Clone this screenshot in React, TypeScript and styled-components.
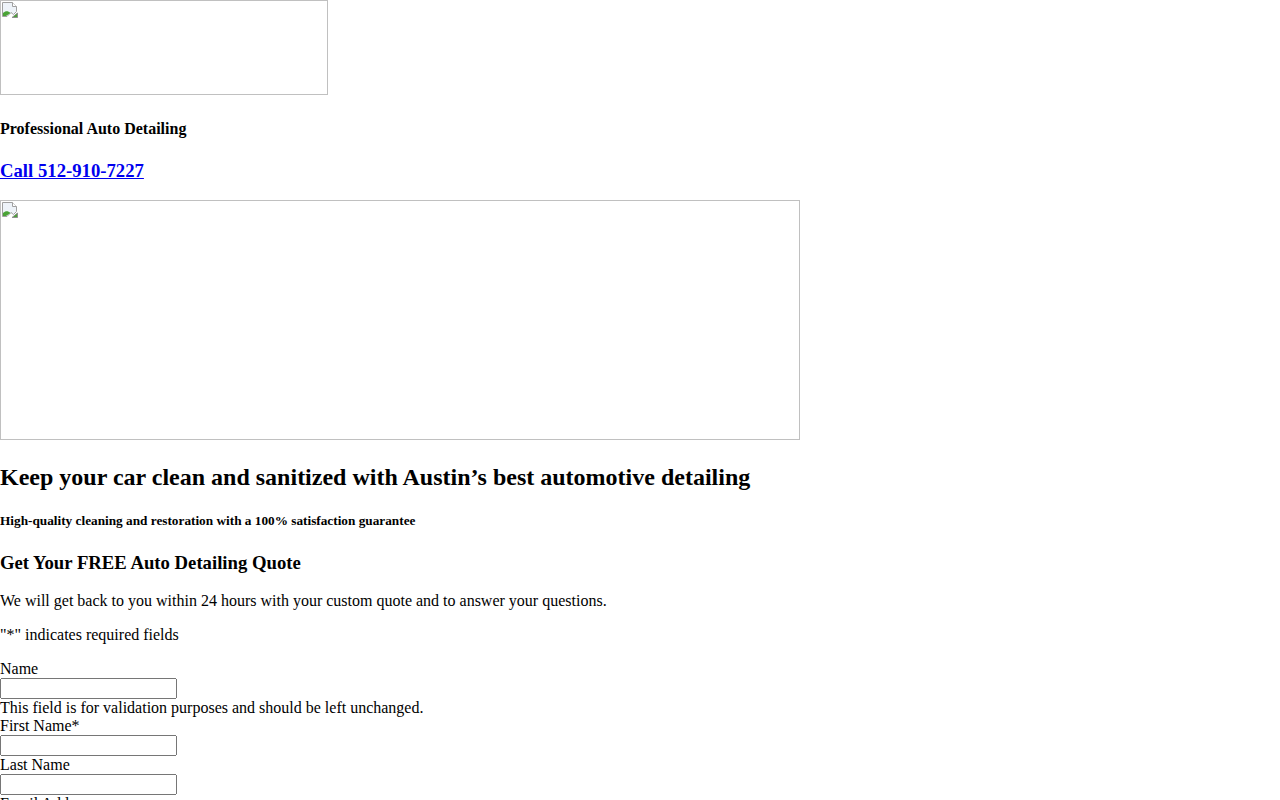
import React from "react";
import styled, { createGlobalStyle } from "styled-components";

const GlobalStyle = createGlobalStyle`
  body {
    margin: 0;
    font-family: "Liberation Serif", "Times New Roman", serif;
    color: #000;
    background: #fff;
  }
`;

// Styled components
const Page = styled.div`
  width: 100%;
`;

const ImageRow = styled.div``;

const BrokenImage = styled.span<{ w: number; h: number }>`
  display: inline-block;
  box-sizing: border-box;
  width: ${({ w }) => w}px;
  height: ${({ h }) => h}px;
  border: 1px solid #c0c0c0;
  overflow: hidden;
  vertical-align: baseline;
`;

const BrokenIcon = styled.svg`
  display: block;
  margin: 1px;
`;

const Tagline = styled.h4``;

const Phone = styled.h3`
  a {
    color: #0000ee;
    text-decoration: underline;
  }
`;

const Headline = styled.h2``;

const Subhead = styled.h5``;

const FormTitle = styled.h3``;

const Text = styled.p``;

const Field = styled.div``;

const FieldLabel = styled.label`
  display: block;
`;

const Note = styled.div``;

const Input = styled.input`
  box-sizing: border-box;
  width: 177px;
  height: 21px;
`;

const ImagePlaceholder = ({ w, h }: { w: number; h: number }) => (
  <ImageRow>
    <BrokenImage w={w} h={h}>
      <BrokenIcon width="16" height="16" viewBox="0 0 16 16">
        <path d="M0.5 0.5h10l4 4v5l-3 3-2.5-2-4 4H0.5z" fill="#eef3f9" stroke="#a0a0a0" />
        <path d="M10.5 0.5v4h4" fill="#fff" stroke="#a0a0a0" />
        <path d="M1 14v-3c2.5-2.5 5-2.5 7.5 0l-4.5 3z" fill="#4aa336" />
        <path d="M15.5 11v4.5h-5.5z" fill="#4aa336" stroke="#909090" strokeLinejoin="round" />
      </BrokenIcon>
    </BrokenImage>
  </ImageRow>
);

const fields = [
  { label: "First Name*" },
  { label: "Last Name" },
  { label: "Email Address" },
  { label: "Phone*" },
];

export default function App() {
  return (
    <Page>
      <GlobalStyle />
      <ImagePlaceholder w={328} h={95} />
      <Tagline>Professional Auto Detailing</Tagline>
      <Phone>
        <a href="#">Call 512-910-7227</a>
      </Phone>
      <ImagePlaceholder w={800} h={240} />
      <Headline>Keep your car clean and sanitized with Austin’s best automotive detailing</Headline>
      <Subhead>High-quality cleaning and restoration with a 100% satisfaction guarantee</Subhead>
      <FormTitle>Get Your FREE Auto Detailing Quote</FormTitle>
      <Text>We will get back to you within 24 hours with your custom quote and to answer your questions.</Text>
      <Text>"*" indicates required fields</Text>
      <Field>
        <FieldLabel>Name</FieldLabel>
        <Input type="text" />
        <Note>This field is for validation purposes and should be left unchanged.</Note>
      </Field>
      {fields.map((f) => (
        <Field key={f.label}>
          <FieldLabel>{f.label}</FieldLabel>
          <Input type="text" />
        </Field>
      ))}
    </Page>
  );
}
